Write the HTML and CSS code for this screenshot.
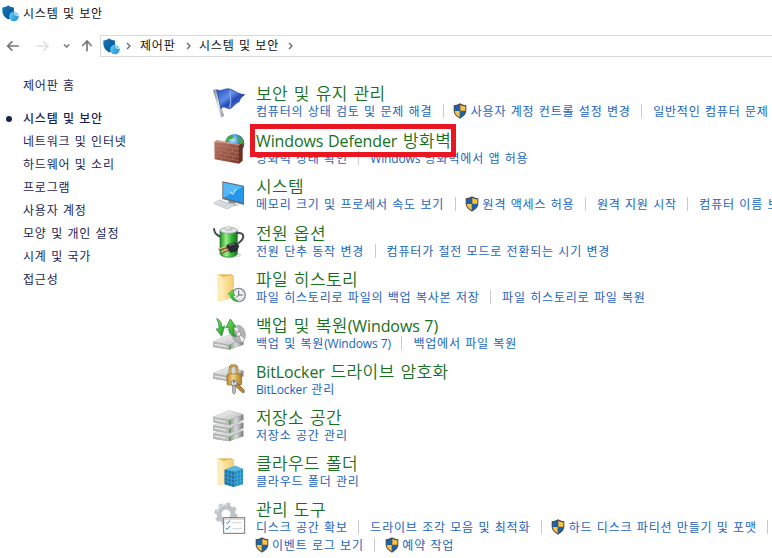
FILE: index.html
```
<!DOCTYPE html>
<html lang="ko">
<head>
<meta charset="utf-8">
<title>시스템 및 보안</title>
<link rel="stylesheet" href="styles.css">
</head>
<body>
<svg class="defs" width="0" height="0" aria-hidden="true">
  <defs>
    <linearGradient id="blueShield" x1="0" y1="0" x2="1" y2="1"><stop offset="0" stop-color="#1379be"/><stop offset="1" stop-color="#07508f"/></linearGradient>
    <linearGradient id="pie" x1="0" y1="0" x2="1" y2="1"><stop offset="0" stop-color="#6ed0f4"/><stop offset="1" stop-color="#1590d0"/></linearGradient>
    <linearGradient id="flag" x1="0" y1="0" x2="1" y2="1"><stop offset="0" stop-color="#2347b8"/><stop offset=".4" stop-color="#5f8de8"/><stop offset=".6" stop-color="#2548b6"/><stop offset="1" stop-color="#6d98eb"/></linearGradient>
    <linearGradient id="pole"><stop offset="0" stop-color="#747983"/><stop offset=".5" stop-color="#e1e5e9"/><stop offset="1" stop-color="#858b94"/></linearGradient>
    <radialGradient id="globe" cx=".4" cy=".3" r=".75"><stop offset="0" stop-color="#bdeaff"/><stop offset=".5" stop-color="#2b86d4"/><stop offset="1" stop-color="#0b3d91"/></radialGradient>
    <linearGradient id="brick" x1="0" y1="0" x2="1" y2="1"><stop offset="0" stop-color="#b97663"/><stop offset="1" stop-color="#7b3a2d"/></linearGradient>
    <linearGradient id="battery"><stop offset="0" stop-color="#1d8a22"/><stop offset=".35" stop-color="#9af089"/><stop offset=".65" stop-color="#38b63a"/><stop offset="1" stop-color="#157219"/></linearGradient>
    <linearGradient id="folder"><stop offset="0" stop-color="#ffe7a5"/><stop offset="1" stop-color="#f3cb70"/></linearGradient>
    <linearGradient id="metal" x1="0" y1="0" x2="1" y2="1"><stop offset="0" stop-color="#fafafa"/><stop offset="1" stop-color="#b9bbbc"/></linearGradient>
    <linearGradient id="metalDark"><stop offset="0" stop-color="#8e9092"/><stop offset=".5" stop-color="#d9dadb"/><stop offset="1" stop-color="#77797a"/></linearGradient>
    <linearGradient id="gold"><stop offset="0" stop-color="#b8822a"/><stop offset=".4" stop-color="#f6dc8a"/><stop offset="1" stop-color="#a77422"/></linearGradient>
    <linearGradient id="green" x1="0" y1="0" x2="1" y2="1"><stop offset="0" stop-color="#7be35f"/><stop offset="1" stop-color="#179a22"/></linearGradient>
    <symbol id="uac" viewBox="0 0 42 48">
      <path d="M21 1C15 5 8 7 2 7v15c0 12 8 19 19 25 11-6 19-13 19-25V7C34 7 27 5 21 1z" fill="#4c4d50"/>
      <path d="M20 5v18H5V10c6 0 11-2 15-5z" fill="#1565b3"/><path d="M22 5v18h15V10c-6 0-11-2-15-5z" fill="#fbc344"/>
      <path d="M20 24v19C12 38 6 33 5 24z" fill="#fbc344"/><path d="M22 24v19c8-5 14-10 15-19z" fill="#1565b3"/>
    </symbol>
    <symbol id="security" viewBox="0 0 50 50">
      <path d="M1 7C8 7 14 5 18 1c4 4 10 6 17 6v12c0 11-7 18-17 24C8 37 1 29 1 18z" fill="url(#blueShield)"/>
      <circle cx="35" cy="34" r="14" fill="url(#pie)"/><path d="M35 34V20a14 14 0 0 1 13 14z" fill="#a9e4fb"/><path d="M35 20v14l10-9M35 34h14" fill="none" stroke="#1682c2" stroke-width="1.6"/>
    </symbol>
    <symbol id="drive" viewBox="0 0 96 48">
      <path d="M2 23 52 3l41 11v17L50 46 2 38z" fill="#999"/>
      <path d="M2 22 49 2l44 12-43 18z" fill="url(#metal)" stroke="#aaa"/>
      <path d="m2 23 48 10v13L4 38q-2-2-2-5z" fill="#b9babb"/><path d="m50 33 43-18v16L50 46z" fill="url(#metalDark)"/>
      <path d="m7 30 35 7" stroke="#f4f4f4" stroke-width="3"/><path d="m50 34 5-2v11l-5 2z" fill="#38b52f"/>
    </symbol>
  </defs>
</svg>

<header class="titlebar"><svg class="app-icon"><use href="#security"/></svg><span class="ko">시스템 및 보안</span></header>

<nav class="navbar">
  <svg class="nav-buttons" viewBox="0 0 300 60" fill="none" stroke-width="5">
    <path d="M56 33H24M37 19 23 33l14 14" stroke="#777"/>
    <path d="M110 33h33M130 19l14 14-14 14" stroke="#dedede"/>
    <path d="m192 28 8 8 8-8" stroke="#888"/>
    <path d="M261 49V19M247 33l14-15 14 15" stroke="#777"/>
  </svg>
  <div class="address">
    <svg class="app-icon"><use href="#security"/></svg>
    <svg class="chevron" viewBox="0 0 6 8"><path d="m1 1 3 3-3 3"/></svg>
    <span class="ko crumb-one">제어판</span>
    <svg class="chevron" viewBox="0 0 6 8"><path d="m1 1 3 3-3 3"/></svg>
    <span class="ko crumb-two">시스템 및 보안</span>
    <svg class="chevron" viewBox="0 0 6 8"><path d="m1 1 3 3-3 3"/></svg>
  </div>
</nav>

<div class="content">
  <aside class="sidebar ko">
    <a class="home">제어판 홈</a>
    <a class="current">시스템 및 보안</a>
    <a>네트워크 및 인터넷</a>
    <a>하드웨어 및 소리</a>
    <a>프로그램</a>
    <a>사용자 계정</a>
    <a>모양 및 개인 설정</a>
    <a>시계 및 국가</a>
    <a>접근성</a>
  </aside>

  <main class="categories">
    <section class="category">
      <svg class="icon" viewBox="18 18 108 108">
        <path d="m24 37 9-4 24 80-9 6z" fill="url(#pole)"/>
        <path d="M34 35c16 8 28-8 44-1 14 7 27 16 41 16-8 5-14 12-17 22-14 3-20 25-35 19-9-4-13-7-19 1z" fill="url(#flag)" stroke="#263f9c" stroke-width="2"/>
        <path d="M78 36c-9 14 6 30-5 53" fill="none" stroke="#87aaf2" stroke-width="4"/>
      </svg>
      <div class="body"><h2>보안 및 유지 관리</h2>
        <div class="links"><a>컴퓨터의 상태 검토 및 문제 해결</a><i></i><a class="admin"><svg><use href="#uac"/></svg>사용자 계정 컨트롤 설정 변경</a><i></i><a>일반적인 컴퓨터 문제</a></div></div>
    </section>

    <section class="category">
      <svg class="icon" viewBox="18 159 108 108">
        <circle cx="89" cy="197" r="29" fill="url(#globe)"/>
        <path d="M67 178c8-9 17-8 20-5l-4 9-10 2-5 10-7-2zM98 174l15 10 4 13-9 8-3-11-8-8zM101 209l10-2-8 15z" fill="#48a64e"/>
        <path d="m28 192 7-6 67 13 11-5-11 62z" fill="#cf9a87"/><path d="m28 192 74 9v56l-73-13z" fill="url(#brick)"/><path d="m102 201 11-7v54l-11 9z" fill="#693023"/>
        <path d="m29 203 73 10m-73 0 73 12m-73-1 73 13m-73-2 73 13M46 195v11m23-8v11m23-8v10M37 206v10m23-7v11m23-8v10M47 217v11m23-7v12m22-8v10M37 227v11m24-7v12m23-8v11M48 239v8m23-4v8" fill="none" stroke="#b98473" stroke-width="1.5"/>
      </svg>
      <div class="body"><h2 class="highlighted"><span class="latin">Windows Defender</span> 방화벽</h2>
        <div class="links"><a>방화벽 상태 확인</a><i></i><a><span class="latin">Windows</span> 방화벽에서 앱 허용</a></div></div>
    </section>

    <section class="category">
      <svg class="icon" viewBox="18 15 108 108">
        <path d="m73 83 18 4-1 14-22-4z" fill="#89939a"/><path d="m69 97 25 6 9-4-24-7z" fill="#bfc6ca"/>
        <path d="m52 28 65 13v58L52 81z" fill="#65717a"/><path d="m55 32 59 12v48L55 76z" fill="#2297eb"/><path d="m55 32 59 12-55 32-4 0z" fill="#55b8f8"/>
        <path d="m76 59 7 8 11-16" fill="none" stroke="#fff" stroke-width="3"/>
        <path d="m26 94 17-10 45 16-21 11z" fill="#e5e8ea" stroke="#a9b0b4" stroke-width="2"/><path d="m33 93 38 14M38 90l39 14M43 87l39 14m-44-4 14-9m-5 13 14-9m-5 13 14-9" stroke="#b0b7bb"/>
      </svg>
      <div class="body"><h2>시스템</h2>
        <div class="links"><a>메모리 크기 및 프로세서 속도 보기</a><i></i><a class="admin"><svg><use href="#uac"/></svg>원격 액세스 허용</a><i></i><a>원격 지원 시작</a><i></i><a>컴퓨터 이름 보</a></div></div>
    </section>

    <section class="category">
      <svg class="icon" viewBox="18 156 108 108">
        <ellipse cx="78" cy="249" rx="31" ry="9" fill="#ddd"/>
        <path d="M27 169c0 13 5 18 21 26" fill="none" stroke="#444951" stroke-width="6"/>
        <path d="M45 175v70c4 14 47 14 52 0v-70z" fill="url(#battery)" stroke="#29742b" stroke-width="2"/>
        <ellipse cx="71" cy="175" rx="26" ry="9" fill="#e3e6e7" stroke="#8a9090" stroke-width="2"/><path d="M61 166q10-7 20 0v7q-10 5-20 0z" fill="url(#metal)" stroke="#999"/>
        <path d="M95 184c20-4 23 8 17 18-5 9-12 9-15 16" fill="none" stroke="#474c54" stroke-width="6"/>
        <path d="m65 219 24-9 14 12-7 16-19 4-15-13z" fill="#282d34"/><path d="m72 220 17-5" stroke="#727981" stroke-width="4"/>
        <path d="m65 226-24 7m29 0-20 9" stroke="#8d652d" stroke-width="7"/><path d="m64 224-24 7m29 0-20 9" stroke="#efd29b" stroke-width="3"/>
      </svg>
      <div class="body"><h2>전원 옵션</h2>
        <div class="links"><a>전원 단추 동작 변경</a><i></i><a>컴퓨터가 절전 모드로 전환되는 시기 변경</a></div></div>
    </section>

    <section class="category">
      <svg class="icon" viewBox="18 18 108 108">
        <path d="M38 31h43v68l-10 5-32 6z" fill="#e7bb61"/><path d="M38 30 54 40v73L38 108z" fill="#ffebb5"/><path d="m54 40 33-8v65l-33 13z" fill="url(#folder)"/>
        <circle cx="101" cy="93" r="22" fill="#858b8e"/><circle cx="101" cy="93" r="18" fill="#eef0f1"/><path d="M101 81v12h11m-11 0-8 8" fill="none" stroke="#59636a" stroke-width="3"/><path d="M101 77v3m0 25v3m-15-15h3m24 0h3M90 82l2 2m19 19 2 2m0-23-2 2" stroke="#686e71" stroke-width="2"/>
        <path d="m68 90 14-13 8 18-6-1c2 8 7 13 15 16-14 2-22-5-25-17z" fill="url(#green)" stroke="#248b35"/>
      </svg>
      <div class="body"><h2>파일 히스토리</h2>
        <div class="links"><a>파일 히스토리로 파일의 백업 복사본 저장</a><i></i><a>파일 히스토리로 파일 복원</a></div></div>
    </section>

    <section class="category">
      <svg class="icon" viewBox="18 156 108 108">
        <use href="#drive" x="22" y="211" width="96" height="48"/>
        <ellipse cx="101" cy="210" rx="20" ry="27" transform="rotate(-12 101 210)" fill="#b1b4b5" stroke="#777"/><path d="m101 210-15-20 9-7zm0 0 10 25 7-9z" fill="#f5f5f5"/><circle cx="101" cy="210" r="7" fill="#eee" stroke="#777" stroke-width="2"/>
        <path d="M35 163c13 7 16 17 15 27l9-4-9 31-17-22 9-1c0-12-2-19-7-31z" fill="url(#green)" stroke="#1d8128" stroke-width="2"/>
        <path d="m76 165 18 25-9-1c-1 12 3 20 8 29-18-4-24-13-21-29l-10 3z" fill="url(#green)" stroke="#1d8128" stroke-width="2"/>
      </svg>
      <div class="body"><h2>백업 및 복원<span class="latin">(Windows 7)</span></h2>
        <div class="links"><a>백업 및 복원<span class="latin">(Windows 7)</span></a><i></i><a>백업에서 파일 복원</a></div></div>
    </section>

    <section class="category">
      <svg class="icon" viewBox="18 12 108 108">
        <use href="#drive" x="22" y="24" width="96" height="48"/>
        <path d="M75 53V34c0-15 21-15 21 0v19" fill="none" stroke="#9c732a" stroke-width="8"/><path d="M75 53V34c0-15 21-15 21 0v19" fill="none" stroke="#f0d68c" stroke-width="3"/>
        <rect x="66" y="48" width="44" height="33" rx="4" fill="url(#gold)" stroke="#9c6b24" stroke-width="2"/><path d="M68 57h40m-40 8h40m-40 8h40" stroke="#d2a246"/>
        <path d="m96 75 22 22-1 7-7-2-22-21z" fill="#ba8a34" stroke="#6e4a19" stroke-width="2"/>
        <circle cx="87" cy="75" r="9" fill="#d9dcdd" stroke="#666" stroke-width="2"/><circle cx="87" cy="71" r="3" fill="#555"/><path d="M83 82h8v22l-4 5-4-5z" fill="#c3c6c8" stroke="#666" stroke-width="2"/>
      </svg>
      <div class="body"><h2><span class="latin">BitLocker</span> 드라이브 암호화</h2>
        <div class="links"><a><span class="latin">BitLocker</span> 관리</a></div></div>
    </section>

    <section class="category">
      <svg class="icon" viewBox="18 150 108 108">
        <use href="#drive" x="22" y="204" width="96" height="48"/><use href="#drive" x="22" y="180" width="96" height="48"/><use href="#drive" x="22" y="155" width="96" height="48"/>
      </svg>
      <div class="body"><h2>저장소 공간</h2>
        <div class="links"><a>저장소 공간 관리</a></div></div>
    </section>

    <section class="category">
      <svg class="icon" viewBox="18 12 108 108">
        <path d="M38 25h43v69l-10 5-32 6z" fill="#e7bb61"/><path d="m38 24 16 10v73l-16-5z" fill="#ffebb5"/><path d="m54 34 33-8v65l-33 13z" fill="url(#folder)"/>
        <path d="m59 59 32-12 23 10v46l-29 8-26-8z" fill="#238fc2"/><path d="m59 59 30 6v46l-30-8z" fill="#1975ac"/><path d="m59 59 32-12 23 10-25 8z" fill="#55b6dd"/>
        <path d="m59 70 30 7 25-8M59 81l30 8 25-8M59 92l30 8 25-8M69 61v44m10-42v46m18-47v45m9-48v46M71 55l27 7m-18-11 27 7M89 65v46" fill="none" stroke="#64b9dd" stroke-width="1.5"/>
      </svg>
      <div class="body"><h2>클라우드 폴더</h2>
        <div class="links"><a>클라우드 폴더 관리</a></div></div>
    </section>

    <section class="category">
      <svg class="icon" viewBox="18 150 108 108">
        <circle cx="63" cy="192" r="21" fill="none" stroke="#bdc3c9" stroke-width="15"/>
        <circle cx="63" cy="192" r="30" fill="none" stroke="#bdc3c9" stroke-width="9" stroke-dasharray="12 11.56"/>
        <path d="M36 187c4-17 16-23 31-23" fill="none" stroke="#d8dde1" stroke-width="5"/>
        <rect x="56" y="203" width="63" height="47" fill="#fff" stroke="#777" stroke-width="3"/><path d="M58 207h59" stroke="#ccc" stroke-width="4"/>
        <path d="M83 218h27m-27 18h27" stroke="#b9b9b9" stroke-width="2"/><path d="m63 217 4 4 8-10m-12 23 4 4 8-10" fill="none" stroke="#2b82c9" stroke-width="3"/>
      </svg>
      <div class="body"><h2>관리 도구</h2>
        <div class="links"><a>디스크 공간 확보</a><i></i><a>드라이브 조각 모음 및 최적화</a><i></i><a class="admin"><svg><use href="#uac"/></svg>하드 디스크 파티션 만들기 및 포맷</a><i></i></div>
        <div class="links continued"><a class="admin"><svg><use href="#uac"/></svg>이벤트 로그 보기</a><i></i><a class="admin"><svg><use href="#uac"/></svg>예약 작업</a></div></div>
    </section>
  </main>
</div>
</body>
</html>
```
FILE: styles.css
```
*, *::before, *::after { box-sizing: border-box; }
body {
  margin: 0;
  width: 772px;
  height: 558px;
  overflow: hidden;
  background: #fff;
  color: #111;
  font: 12px/18px "Noto Sans CJK KR", sans-serif;
  white-space: nowrap;
}
svg { display: block; flex: none; }
.defs { position: absolute; }
.ko { letter-spacing: .8px; word-spacing: .3px; }

.titlebar { display: flex; align-items: center; height: 27px; padding-left: 2px; gap: 4px; }
.titlebar .ko, .address .ko { padding-bottom: 2px; }
.app-icon { width: 17px; height: 17px; }

.navbar { display: flex; height: 30px; padding-top: 8px; }
.nav-buttons { width: 100px; height: 20px; }
.address {
  display: flex;
  align-items: center;
  flex: 1;
  height: 22px;
  padding-left: 2px;
  border: 1px solid #d9d9d9;
  border-right: 0;
}
.chevron { width: 6px; height: 8px; margin-left: 6px; fill: none; stroke: #666; stroke-width: 1.3; }
.crumb-one { margin-left: 8px; margin-right: 4px; }
.crumb-two { margin-left: 7.5px; margin-right: 3px; }

.content { display: grid; grid-template-columns: 211px 1fr; padding-top: 18px; }
.sidebar { display: flex; flex-direction: column; padding: 1px 0 0 23px; color: #1b1f55; line-height: 23px; }
.sidebar .home { line-height: 18px; margin-bottom: 12px; }
.sidebar .current { position: relative; font-weight: 500; }
.current::before {
  content: "";
  position: absolute;
  left: -17px;
  top: 10px;
  width: 6px;
  height: 6px;
  border-radius: 50%;
  background: #1b1f55;
}

.categories { display: grid; grid-template-rows: 47px 46px 47px 46px 46px 46px 46px 46px 46px 58px; padding-top: 9px; }
.category { display: flex; gap: 9px; }
.icon { width: 36px; height: 36px; }
h2 {
  position: relative;
  height: 18px;
  margin: 0;
  font-size: 17px;
  font-weight: 350;
  line-height: 17px;
  letter-spacing: .4px;
  word-spacing: .6px;
  color: #17701c;
}
.latin { font-family: "Open Sans", sans-serif; letter-spacing: -.15px; }
h2 .latin { font-size: 16px; font-weight: 400; letter-spacing: -.1px; }
.highlighted::after {
  content: "";
  position: absolute;
  left: -6px;
  top: -7px;
  width: 206px;
  height: 33px;
  border: 5px solid #ea1722;
}
.links { display: flex; align-items: center; height: 18px; letter-spacing: .8px; word-spacing: .3px; color: #1a64bd; }
.links i { width: 1px; height: 14px; margin: 0 11px 0 10.5px; background: #ccc; }
.admin { display: flex; align-items: center; gap: 3.5px; margin-left: -1.5px; }
.admin svg { width: 14px; height: 16px; }
```
